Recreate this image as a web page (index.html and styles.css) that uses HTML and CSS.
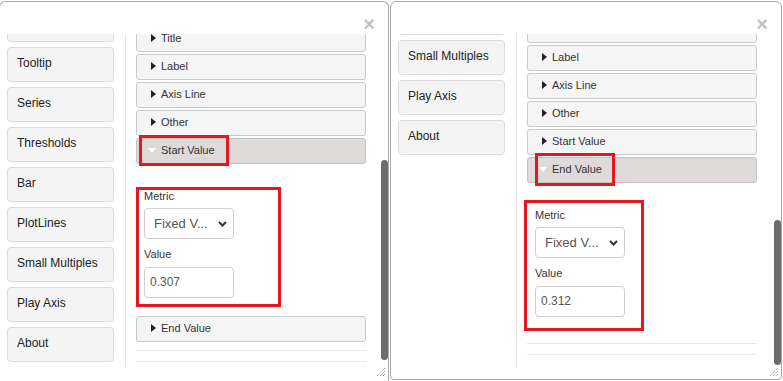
FILE: index.html
```html
<!DOCTYPE html>
<html>
<head>
    <title>Chart Settings</title>
    <link rel="stylesheet" href="styles.css">
</head>
<body>
    <!-- Left dialog: Start Value open -->
    <div class="dialog dialog-left">
        <div class="dialog-head"><span class="close">&times;</span></div>
        <div class="dialog-body">
            <div class="nav">
                <div class="nav-list nav-list-left">
                    <div class="nav-btn"></div>
                    <div class="nav-btn">Tooltip</div>
                    <div class="nav-btn">Series</div>
                    <div class="nav-btn">Thresholds</div>
                    <div class="nav-btn">Bar</div>
                    <div class="nav-btn">PlotLines</div>
                    <div class="nav-btn">Small Multiples</div>
                    <div class="nav-btn">Play Axis</div>
                    <div class="nav-btn">About</div>
                </div>
            </div>
            <div class="acc">
                <div class="acc-list acc-list-left">
                    <div class="acc-head"><span class="tri"><svg width="5" height="8" viewBox="0 0 5 8"><path d="M0 0 L5 4 L0 8 Z" fill="#222"/></svg></span>Title</div>
                    <div class="acc-head"><span class="tri"><svg width="5" height="8" viewBox="0 0 5 8"><path d="M0 0 L5 4 L0 8 Z" fill="#222"/></svg></span>Label</div>
                    <div class="acc-head"><span class="tri"><svg width="5" height="8" viewBox="0 0 5 8"><path d="M0 0 L5 4 L0 8 Z" fill="#222"/></svg></span>Axis Line</div>
                    <div class="acc-head"><span class="tri"><svg width="5" height="8" viewBox="0 0 5 8"><path d="M0 0 L5 4 L0 8 Z" fill="#222"/></svg></span>Other</div>
                    <div class="acc-head open"><span class="tri tri-open"><svg width="8" height="5" viewBox="0 0 8 5"><path d="M0 0 L8 0 L4 5 Z" fill="#fff"/></svg></span>Start Value</div>
                    <div class="acc-body">
                        <div class="field-label">Metric</div>
                        <div class="select"><span>Fixed V...</span><svg width="9" height="6" viewBox="0 0 9 6"><path d="M1 1 L4.5 4.5 L8 1" fill="none" stroke="#333" stroke-width="2"/></svg></div>
                        <div class="field-label field-gap">Value</div>
                        <div class="input">0.307</div>
                    </div>
                    <div class="acc-head"><span class="tri"><svg width="5" height="8" viewBox="0 0 5 8"><path d="M0 0 L5 4 L0 8 Z" fill="#222"/></svg></span>End Value</div>
                    <div class="acc-sep"></div>
                    <div class="acc-sep acc-sep-2"></div>
                </div>
            </div>
            <div class="track"><div class="thumb thumb-left"></div></div>
        </div>
        <div class="dialog-foot">
            <svg class="grip" width="8" height="8" viewBox="0 0 8 8"><path d="M8 0 L0 8 M8 3 L3 8 M8 6 L6 8" stroke="#8a8a8a" stroke-width="1" stroke-dasharray="1 1"/></svg>
        </div>
        <div class="mark mark-left-head"></div>
        <div class="mark mark-left-body"></div>
    </div>

    <!-- Right dialog: End Value open -->
    <div class="dialog dialog-right">
        <div class="dialog-head"><span class="close">&times;</span></div>
        <div class="dialog-body">
            <div class="nav">
                <div class="nav-list nav-list-right">
                    <div class="nav-btn"></div>
                    <div class="nav-btn">Small Multiples</div>
                    <div class="nav-btn">Play Axis</div>
                    <div class="nav-btn">About</div>
                </div>
            </div>
            <div class="acc">
                <div class="acc-list acc-list-right">
                    <div class="acc-head"></div>
                    <div class="acc-head"><span class="tri"><svg width="5" height="8" viewBox="0 0 5 8"><path d="M0 0 L5 4 L0 8 Z" fill="#222"/></svg></span>Label</div>
                    <div class="acc-head"><span class="tri"><svg width="5" height="8" viewBox="0 0 5 8"><path d="M0 0 L5 4 L0 8 Z" fill="#222"/></svg></span>Axis Line</div>
                    <div class="acc-head"><span class="tri"><svg width="5" height="8" viewBox="0 0 5 8"><path d="M0 0 L5 4 L0 8 Z" fill="#222"/></svg></span>Other</div>
                    <div class="acc-head"><span class="tri"><svg width="5" height="8" viewBox="0 0 5 8"><path d="M0 0 L5 4 L0 8 Z" fill="#222"/></svg></span>Start Value</div>
                    <div class="acc-head open"><span class="tri tri-open"><svg width="8" height="5" viewBox="0 0 8 5"><path d="M0 0 L8 0 L4 5 Z" fill="#fff"/></svg></span>End Value</div>
                    <div class="acc-body">
                        <div class="field-label">Metric</div>
                        <div class="select"><span>Fixed V...</span><svg width="9" height="6" viewBox="0 0 9 6"><path d="M1 1 L4.5 4.5 L8 1" fill="none" stroke="#333" stroke-width="2"/></svg></div>
                        <div class="field-label field-gap">Value</div>
                        <div class="input">0.312</div>
                    </div>
                    <div class="acc-sep"></div>
                    <div class="acc-sep acc-sep-2"></div>
                </div>
            </div>
            <div class="track"><div class="thumb thumb-right"></div></div>
        </div>
        <div class="dialog-foot">
            <svg class="grip" width="8" height="8" viewBox="0 0 8 8"><path d="M8 0 L0 8 M8 3 L3 8 M8 6 L6 8" stroke="#8a8a8a" stroke-width="1" stroke-dasharray="1 1"/></svg>
        </div>
        <div class="mark mark-right-head"></div>
        <div class="mark mark-right-body"></div>
    </div>
</body>
</html>
```

FILE: styles.css
```css
body {
    margin: 0px;
    padding: 1px 0px 0px;
    height: 380px;
    overflow: hidden;
    display: flex;
    gap: 1px;
    align-items: flex-start;
    background-color: #fff;
    font-family: 'Liberation Sans', Arial, sans-serif;
    color: #333;
}

.dialog {
    position: relative;
    box-sizing: border-box;
    display: flex;
    flex-direction: column;
    background-color: #fff;
    border: 1px solid #a9a9a9;
    border-radius: 6px;
    flex-shrink: 0;
}

.dialog-left {
    width: 390px;
    height: 380px;
    margin-left: -1px;
    border-bottom: none;
    border-radius: 6px 6px 0px 0px;
}

.dialog-right {
    width: 392px;
    height: 379px;
    border-radius: 6px 6px 4px 4px;
}

.dialog-head {
    height: 32px;
    display: flex;
    justify-content: flex-end;
    align-items: flex-end;
    padding-right: 13px;
    box-sizing: border-box;
}

.close {
    font-size: 20px;
    font-weight: bold;
    line-height: 20px;
    color: #c2c2c2;
    margin-bottom: 0px;
}

.dialog-body {
    height: 333px;
    display: flex;
    overflow: hidden;
}

/* left column of section buttons */
.nav {
    box-sizing: border-box;
    width: 126px;
    padding-left: 7px;
    border-right: 1px solid #e6e6e6;
    overflow: hidden;
    flex-shrink: 0;
}

.nav-list-left { margin-top: -27px; }
.nav-list-right { margin-top: -34px; }

.nav-btn {
    box-sizing: border-box;
    width: 107px;
    height: 35px;
    margin-bottom: 5px;
    padding-left: 9px;
    background-color: #f4f4f4;
    border: 1px solid #dcdcdc;
    border-radius: 4px;
    font-size: 12px;
    line-height: 31px;
    color: #222;
}

/* accordion */
.acc {
    width: 230px;
    margin-left: 10px;
    overflow: hidden;
    flex-shrink: 0;
}

.acc-list-left { margin-top: -8px; }
.acc-list-right { margin-top: -17px; }

.acc-head {
    box-sizing: border-box;
    height: 26px;
    margin-bottom: 2px;
    padding: 0px 0px 2px 11px;
    display: flex;
    align-items: center;
    background-color: #f5f5f5;
    border: 1px solid #c9c9c9;
    border-radius: 3px;
    font-size: 11px;
    line-height: 20px;
    color: #333;
}

.acc-head.open {
    background-color: #dedada;
    border-color: #c4c2c2;
}

.tri {
    width: 13px;
    display: flex;
    align-items: center;
    padding-left: 3px;
    box-sizing: border-box;
}

.tri-open { padding-left: 0px; }

.acc-body {
    padding: 24px 8px 18px;
}

.field-label {
    font-size: 11px;
    line-height: 13px;
    color: #333;
}

.field-gap { margin-top: 9px; }

.select {
    box-sizing: border-box;
    width: 90px;
    height: 31px;
    margin-top: 5px;
    padding: 0px 6px 0px 9px;
    display: flex;
    justify-content: space-between;
    align-items: center;
    border: 1px solid #cfcfcf;
    border-radius: 4px;
    font-size: 13px;
    line-height: 29px;
    color: #555;
}

.input {
    box-sizing: border-box;
    width: 90px;
    height: 31px;
    margin-top: 6px;
    padding-left: 5px;
    border: 1px solid #cfcfcf;
    border-radius: 4px;
    font-size: 12px;
    line-height: 29px;
    color: #555;
}

.acc-sep {
    height: 1px;
    margin-top: 8px;
    background-color: #e8e8e8;
}

.acc-sep-2 { margin-top: 10px; }

/* scrollbar */
.track {
    width: 7px;
    margin-left: auto;
    flex-shrink: 0;
}

.thumb {
    width: 7px;
    border-radius: 4px;
    background-color: #6c6c6c;
}

.thumb-left { margin-top: 126px; height: 200px; }
.thumb-right { margin-top: 186px; height: 145px; }

.dialog-foot {
    height: 12px;
    display: flex;
    justify-content: flex-end;
    padding-top: 1px;
    padding-right: 3px;
    box-sizing: border-box;
}

/* red highlight boxes drawn over the screenshot */
.mark {
    position: absolute;
    box-sizing: border-box;
    border: 3px solid #e8161e;
}

.mark-left-head { left: 139px; top: 133px; width: 90px; height: 31px; }
.mark-left-body { left: 136px; top: 185px; width: 145px; height: 120px; }
.mark-right-head { left: 144px; top: 151px; width: 80px; height: 33px; }
.mark-right-body { left: 133px; top: 198px; width: 120px; height: 131px; }
```
